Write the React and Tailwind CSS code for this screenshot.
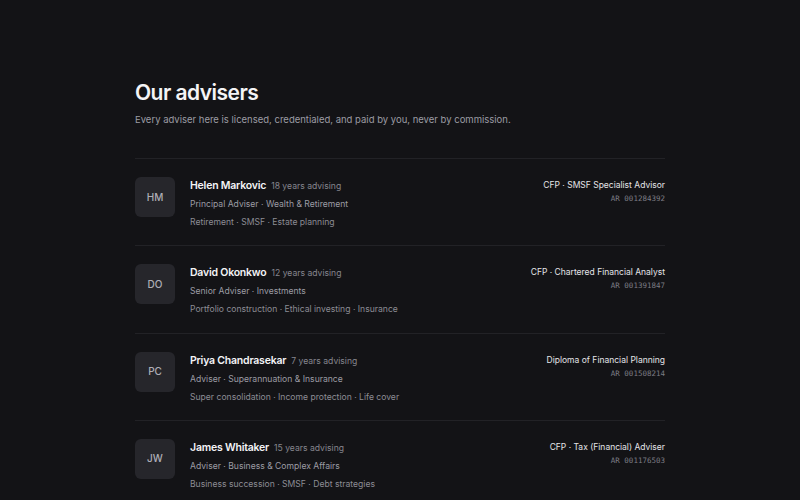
const advisers = [
    {
        initials: 'HM',
        name: 'Helen Markovic',
        years: 18,
        role: 'Principal Adviser · Wealth & Retirement',
        focus: 'Retirement · SMSF · Estate planning',
        credential: 'CFP · SMSF Specialist Advisor',
        ar: 'AR 001284392',
    },
    {
        initials: 'DO',
        name: 'David Okonkwo',
        years: 12,
        role: 'Senior Adviser · Investments',
        focus: 'Portfolio construction · Ethical investing · Insurance',
        credential: 'CFP · Chartered Financial Analyst',
        ar: 'AR 001391847',
    },
    {
        initials: 'PC',
        name: 'Priya Chandrasekar',
        years: 7,
        role: 'Adviser · Superannuation & Insurance',
        focus: 'Super consolidation · Income protection · Life cover',
        credential: 'Diploma of Financial Planning',
        ar: 'AR 001508214',
    },
    {
        initials: 'JW',
        name: 'James Whitaker',
        years: 15,
        role: 'Adviser · Business & Complex Affairs',
        focus: 'Business succession · SMSF · Debt strategies',
        credential: 'CFP · Tax (Financial) Adviser',
        ar: 'AR 001176503',
    },
]

const AdviserRow = ({ adviser }) => (
    <li className="flex items-start gap-[15px] border-t border-[#222226] pt-[18px] pb-[14.3px]">
        <div className="flex h-10 w-10 shrink-0 items-center justify-center rounded-md bg-[#26262b] text-[10px] font-medium text-[#aeaeb6]">
            {adviser.initials}
        </div>
        <div className="flex-1 min-w-0">
            <div className="flex h-[18px] items-baseline gap-[5px] leading-[17px]">
                <span className="text-[10.5px] font-semibold tracking-[-0.02em] text-[#f4f4f6]">{adviser.name}</span>
                <span className="text-[8.6px] text-[#86868e]">{adviser.years} years advising</span>
            </div>
            <p className="text-[8.6px] leading-[18px] text-[#9c9ca4]">{adviser.role}</p>
            <p className="text-[8.6px] leading-[18px] text-[#8c8c94]">{adviser.focus}</p>
        </div>
        <div className="text-right">
            <p className="text-[8.5px] leading-[16px] text-[#e4e4e8]">{adviser.credential}</p>
            <p className="text-[7.5px] leading-[12px] text-[#7c7c84] font-['DejaVu_Sans_Mono',monospace]">{adviser.ar}</p>
        </div>
    </li>
)

export default function App() {
    return (
        <div className="min-h-[500px] bg-[#131316] font-['Inter',sans-serif]">
            <div className="mx-auto w-[530px] pt-[79px]">
                <h1 className="text-[21px] font-semibold leading-[28px] tracking-[-0.025em] text-[#f4f4f6]">Our advisers</h1>
                <p className="mt-[6px] text-[9.5px] leading-[14px] text-[#9c9ca4]">
                    Every adviser here is licensed, credentialed, and paid by you, never by commission.
                </p>
                <ul className="mt-[31px]">
                    {advisers.map((a) => (
                        <AdviserRow key={a.initials} adviser={a} />
                    ))}
                </ul>
            </div>
        </div>
    )
}
